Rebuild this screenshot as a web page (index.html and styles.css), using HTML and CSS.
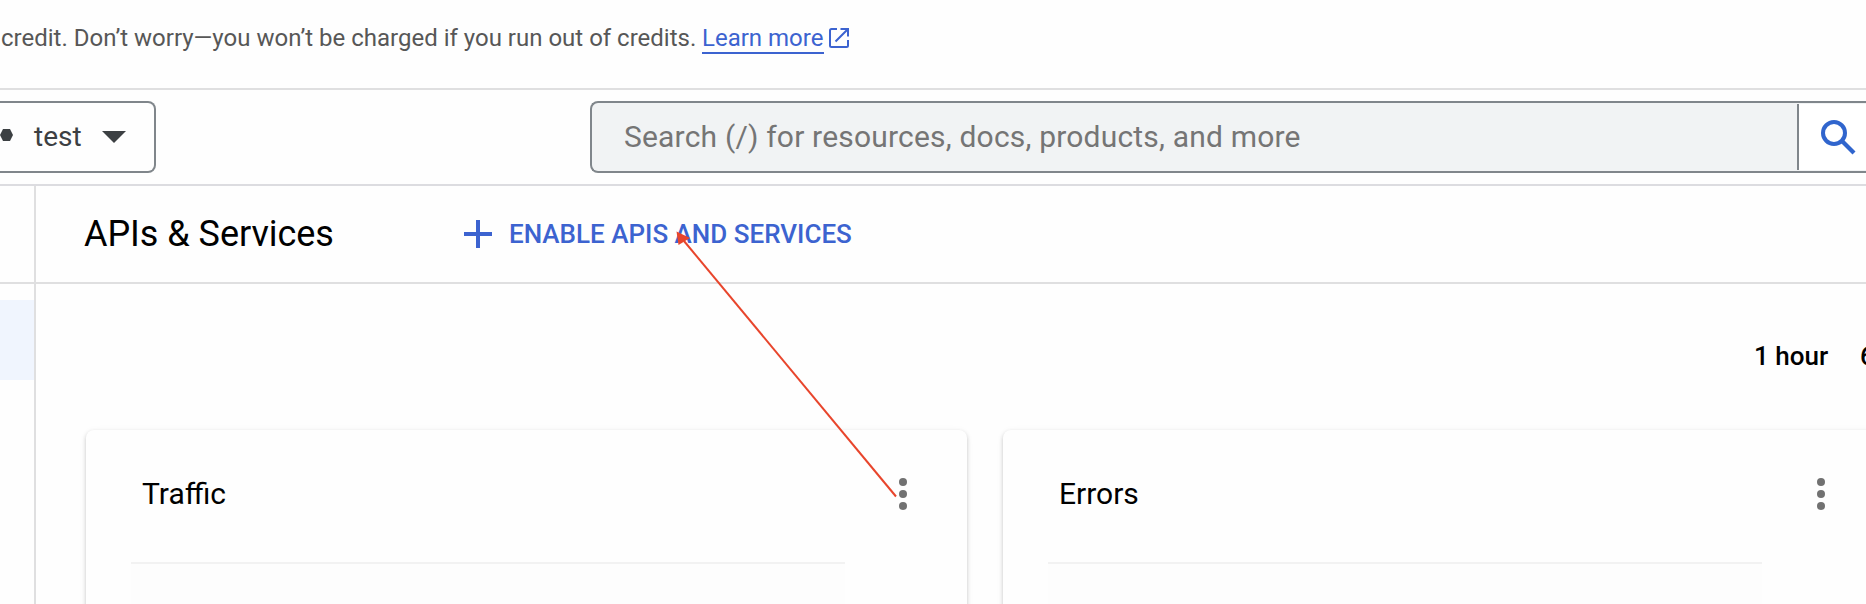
FILE: index.html
```html
<!DOCTYPE html>
<html lang="en">
<head>
<meta charset="utf-8">
<title>APIs &amp; Services</title>
<link rel="stylesheet" href="styles.css">
</head>
<body>
<div class="banner">
  <span class="banner-text">credit. Don’t worry—you won’t be charged if you run out of credits.</span>
  <a class="learn">Learn more</a>
  <svg class="external" width="20" height="20" viewBox="0 0 20 20"><path d="M8 1H2.500Q1 1 1 2.500V17.500Q1 19 2.500 19H17.500Q19 19 19 17.500V12M11.500 1H19V8.500M19 1L6.500 13.500" fill="none" stroke="currentColor" stroke-width="2"/></svg>
</div>
<header class="topbar">
  <div class="project">
    <svg class="hexagon" width="13" height="12" viewBox="0 0 13 12"><path d="M3 0H10L13 6L10 12H3L0 6Z"/></svg>
    <span class="project-name">test</span>
    <svg class="caret" width="24" height="12" viewBox="0 0 24 12"><path d="M0 0H24L12 12Z"/></svg>
  </div>
  <div class="search">
    <div class="search-input"><span>Search (/) for resources, docs, products, and more</span></div>
    <div class="search-button">
      <svg width="36" height="36" viewBox="0 0 36 36"><circle cx="14" cy="14" r="11" fill="none" stroke="currentColor" stroke-width="4"/><path d="M21.500 21.500L34 34" stroke="currentColor" stroke-width="4.300"/></svg>
    </div>
  </div>
</header>
<div class="layout">
  <nav class="sidebar"><div class="sidebar-head"></div><div class="sidebar-active"></div></nav>
  <main class="main">
    <div class="toolbar">
      <h1 class="title">APIs &amp; Services</h1>
      <div class="enable">
        <svg width="28" height="28" viewBox="0 0 28 28"><path d="M14 0V28M0 14H28" stroke="currentColor" stroke-width="4"/></svg>
        <span class="enable-label">ENABLE APIS AND SERVICES</span>
      </div>
    </div>
    <div class="ranges"><span>1 hour</span><span>6 hours</span></div>
    <div class="cards">
      <section class="card">
        <div class="card-head"><h2>Traffic</h2>
          <svg class="more" width="8" height="32" viewBox="0 0 8 32"><circle cx="4" cy="4" r="4"/><circle cx="4" cy="16" r="4"/><circle cx="4" cy="28" r="4"/></svg>
        </div>
        <div class="chart"></div>
      </section>
      <section class="card card-errors">
        <div class="card-head"><h2>Errors</h2>
          <svg class="more" width="8" height="32" viewBox="0 0 8 32"><circle cx="4" cy="4" r="4"/><circle cx="4" cy="16" r="4"/><circle cx="4" cy="28" r="4"/></svg>
        </div>
        <div class="chart"></div>
      </section>
    </div>
  </main>
</div>
<svg class="arrow" width="230" height="270" viewBox="670 230 230 270"><path d="M896 496.500L684 241" stroke="#e8452c" stroke-width="2"/><path d="M676.500 231.500L690 238L678.500 245Z" fill="#e8452c"/></svg>
</body>
</html>
```
FILE: styles.css
```css
* { box-sizing: border-box; }
body {
  margin: 0;
  width: 1866px;
  height: 604px;
  overflow: hidden;
  position: relative;
  background: #fefefe;
  color: #000;
  font-family: Roboto, sans-serif;
}
svg { display: block; flex: none; }
h1, h2 { margin: 0; font-weight: 400; }
span, a, h1, h2 { white-space: nowrap; }
.banner {
  display: flex;
  align-items: flex-start;
  height: 90px;
  padding: 24px 0 0 1px;
  border-bottom: 2px solid #dfdfe0;
  font-size: 24px;
  line-height: 28px;
  color: #575757;
}
.banner-text { width: 701px; }
.learn {
  width: 122px;
  height: 30px;
  border-bottom: 2px solid #3c63d0;
  color: #3c63d0;
}
.external { margin: 4px 0 0 5px; color: #3c63d0; }
.topbar {
  display: flex;
  height: 96px;
  padding-top: 11px;
  border-bottom: 2px solid #dcdce0;
}
.project {
  display: flex;
  align-items: center;
  width: 156px;
  height: 72px;
  border: 2px solid #80868b;
  border-left: 0;
  border-radius: 0 8px 8px 0;
  color: #3c4043;
  font-size: 28px;
}
.project svg { fill: #3c4043; }
.hexagon { margin-top: -4px; }
.project-name { width: 68px; margin-left: 21px; padding-bottom: 2px; }
.search {
  display: flex;
  width: 1276px;
  height: 72px;
  margin-left: 434px;
  border: 2px solid #80868b;
  border-right: 0;
  border-radius: 8px 0 0 8px;
  background: #f1f3f4;
}
.search-input {
  display: flex;
  align-items: center;
  width: 1205px;
  padding: 0 0 2px 32px;
  color: #757575;
  font-size: 30px;
  letter-spacing: 0.19px;
}
.search-button {
  flex: 1;
  margin: 1px 0;
  padding: 15px 0 0 21px;
  border-left: 2px solid #80868b;
  background: #fff;
  color: #3065cd;
}
.layout { display: flex; height: 418px; }
.sidebar { width: 36px; border-right: 2px solid #dfdfe0; flex: none; }
.sidebar-head { height: 98px; border-bottom: 2px solid #dfdfe0; }
.sidebar-active { height: 80px; margin-top: 16px; background: #f0f5fe; }
.main { width: 1830px; overflow: hidden; }
.toolbar {
  display: flex;
  align-items: center;
  height: 98px;
  padding-left: 48px;
  border-bottom: 2px solid #dfdfe0;
}
.title { width: 380px; font-size: 36px; letter-spacing: -0.04px; }
.enable { display: flex; align-items: center; color: #3c63d0; }
.enable-label { margin-left: 17px; font-size: 26px; font-weight: 500; }
.ranges {
  display: flex;
  gap: 32px;
  height: 146px;
  padding: 56px 0 0 1718px;
  font-size: 26px;
  line-height: 32px;
  font-weight: 500;
}
.cards { display: flex; gap: 36px; padding-left: 50px; }
.card {
  flex: none;
  width: 881px;
  height: 240px;
  padding-left: 45px;
  border-radius: 8px 8px 0 0;
  background: #fefefe;
  box-shadow: 0 2px 4px rgba(0, 0, 0, 0.2), 0 1px 8px rgba(0, 0, 0, 0.04);
}
.card-errors { width: 882px; }
.card-head {
  display: flex;
  align-items: center;
  justify-content: space-between;
  height: 132px;
  padding: 0 60px 4px 11px;
}
.card h2 { padding-bottom: 2px; font-size: 30px; }
.more { fill: #717171; }
.chart { width: 714px; height: 100px; border-top: 2px solid #f2f2f2; background: #fdfdfd; }
.arrow { position: absolute; left: 670px; top: 230px; }
```
